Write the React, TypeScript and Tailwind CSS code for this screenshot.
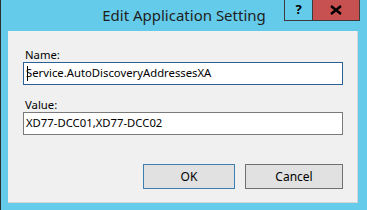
import React from 'react';

const font = { fontFamily: '"Noto Sans", "Open Sans", sans-serif' };

export default function App() {
  return (
    <div
      className="w-[367px] h-[210px] bg-[#65cbea] border-l border-[#2d2d2d] flex flex-col overflow-hidden"
      style={font}
    >
      {/* title bar */}
      <div className="h-[31px] relative shrink-0">
        <div className="h-[29px] flex items-center justify-center pt-[1px] text-[15px] text-[#1e1e1e]">
          Edit Application Setting
        </div>
        <div className="absolute top-0 right-[7px] flex">
          <div className="w-[29px] h-[21px] border border-t-0 border-[#3c3c3c] flex items-center justify-center text-[13px] font-bold text-black">
            ?
          </div>
          <div className="w-[47px] h-[21px] bg-[#c75050] border border-l-0 border-t-0 border-[#3c3c3c] flex items-center justify-center">
            <svg width="12" height="10" viewBox="0 0 12 10">
              <path d="M1 1L11 9M11 1L1 9" stroke="#000" strokeWidth="2.4" />
            </svg>
          </div>
        </div>
      </div>

      {/* client area */}
      <div className="ml-[7px] mr-[9px] h-[172px] bg-[#f0f0f0] border-r border-b border-[#d6d6d6] pl-[15px] pr-[14px] pt-[16px] flex flex-col text-[11.3px] text-black">
        <label className="leading-[15px] pl-[2px]">Name:</label>
        <div className="h-[23px] border border-[#2a6095] bg-white flex items-center pl-[2px] relative">
          <span className="w-px h-[15px] bg-black absolute left-[3px]" />
          <span>Service.AutoDiscoveryAddressesXA</span>
        </div>
        <label className="mt-[12px] leading-[15px] pl-[2px]">Value:</label>
        <div className="h-[23px] border border-[#7a7a7a] bg-white flex items-center pl-[2px]">
          XD77-DCC01,XD77-DCC02
        </div>
        <div className="mt-[29px] flex justify-end gap-[10px]">
          <button className="w-[92px] h-[25px] border border-[#3c7fb1] bg-[#e1e1e1] text-[12px]">
            OK
          </button>
          <button className="w-[98px] h-[25px] border border-[#707070] bg-[#e1e1e1] text-[12px]">
            Cancel
          </button>
        </div>
      </div>
    </div>
  );
}
